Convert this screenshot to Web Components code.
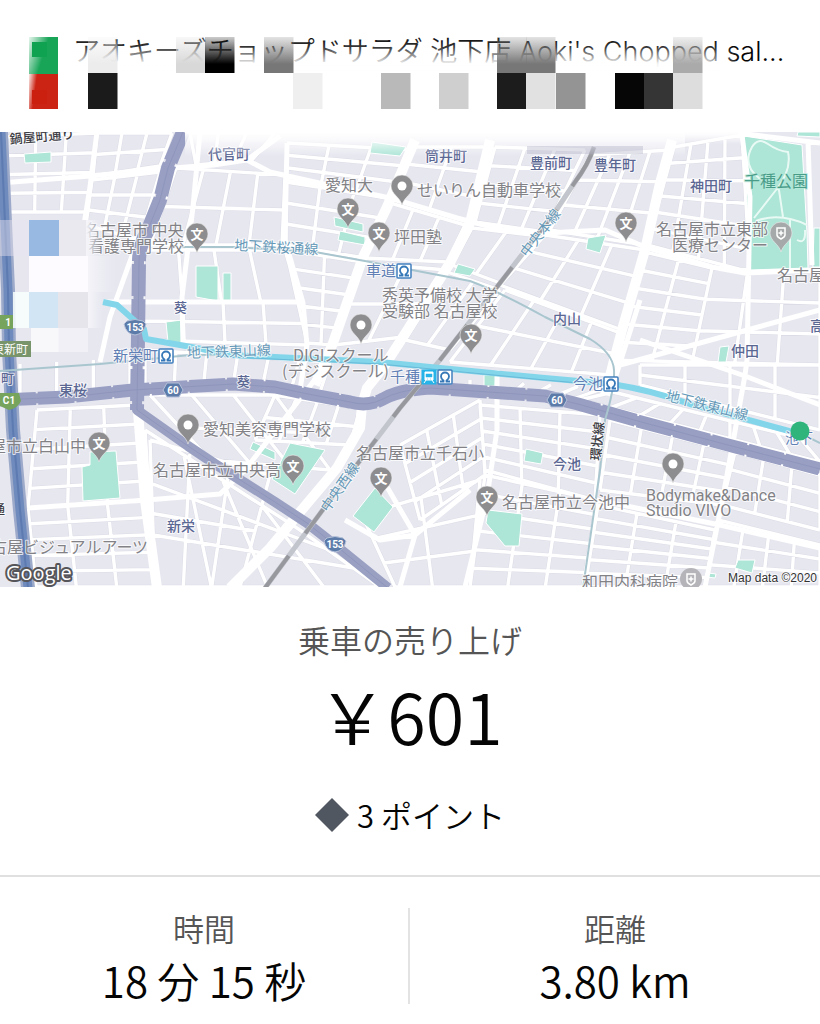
<!DOCTYPE html>
<html lang="ja">
<head>
<meta charset="utf-8">
<meta name="viewport" content="width=device-width, initial-scale=1">
<title>乗車の売り上げ</title>
<style>
  body {
    margin: 0;
    background: #fff;
    color: #050505;
    font-family: "Noto Sans CJK JP", "Noto Sans", sans-serif;
    font-weight: 350;
  }
</style>
</head>
<body>
<trip-receipt>
  <trip-address slot="address">アオキーズチョップドサラダ 池下店 Aoki's Chopped sal...</trip-address>
  <trip-map slot="map"></trip-map>
  <trip-earnings label="乗車の売り上げ" amount="￥601">3 ポイント</trip-earnings>
  <trip-metrics slot="metrics">
    <trip-metric label="時間">18 分 15 秒</trip-metric>
    <trip-metric label="距離">3.80 km</trip-metric>
  </trip-metrics>
</trip-receipt>

<script>
class TripReceipt extends HTMLElement {
  constructor() {
    super();
    this._root = this.attachShadow({ mode: "open" });
  }

  connectedCallback() {
    this._root.innerHTML = `
    <style>
        :host { display: flex; flex-direction: column; }
    </style>
    <slot name="address"></slot>
    <slot name="map"></slot>
    <slot></slot>
    <slot name="metrics"></slot>
    `;
  }
}
customElements.define("trip-receipt", TripReceipt);

class TripAddress extends HTMLElement {
  constructor() {
    super();
    this._root = this.attachShadow({ mode: "open" });
  }

  connectedCallback() {
    // redaction tiles: x, y, fill
    const tiles = [
      [88, 37, "url(#t1)"], [176, 37, "url(#t2)"], [205, 37, "url(#t3)"],
      [264, 37, "url(#t4)"], [497, 37, "url(#t4)"], [526, 37, "url(#t4)"],
      [673, 37, "url(#t5)"], [88, 73, "#1b1b1b"], [293, 73, "#efefef"],
      [381, 73, "#b9b9b9"], [439, 73, "#cfcfcf"], [497, 73, "#1c1c1c"],
      [526, 73, "#e1e1e1"], [556, 73, "#949494"], [615, 73, "#060606"],
      [644, 73, "#353535"], [673, 73, "#dddddd"]
    ];
    const fade = (id, color) => `
      <linearGradient id="${id}" x2="0" y2="1">
        <stop offset="0" stop-color="${color}" stop-opacity=".2"/>
        <stop offset=".75" stop-color="${color}"/>
      </linearGradient>`;

    this._root.innerHTML = `
    <style>
        :host {
            display: block;
            position: relative;
            box-sizing: border-box;
            padding: 32px 32px 60px 73px;
            font-family: Inter, "Noto Sans CJK JP", sans-serif;
            font-size: 27px;
            line-height: 40px;
            white-space: nowrap;
            overflow: hidden;
        }
        svg {
            position: absolute;
            top: 0;
            left: 0;
            width: 100%;
        }
    </style>
    <slot></slot>
    <svg viewBox="0 0 820 132" aria-hidden="true">
      <defs>
        <linearGradient id="veil" x2="0" y2="1">
          <stop offset="0" stop-color="#fff" stop-opacity="0"/>
          <stop offset=".3" stop-color="#fff" stop-opacity=".2"/>
          <stop offset=".75" stop-color="#fff" stop-opacity=".95"/>
          <stop offset="1" stop-color="#fff"/>
        </linearGradient>
        <linearGradient id="side">
          <stop offset="0" stop-color="#fff"/>
          <stop offset=".95" stop-color="#fff"/>
          <stop offset="1" stop-color="#000"/>
        </linearGradient>
        <mask id="m"><rect x="70" width="670" height="132" fill="url(#side)"/></mask>
        <linearGradient id="edge" x2="1" y2=".4">
          <stop offset="0" stop-color="#fff" stop-opacity=".9"/>
          <stop offset=".6" stop-color="#fff" stop-opacity="0"/>
        </linearGradient>
        ${fade("t1", "#ececec")}${fade("t2", "#d8d8d8")}${fade("t3", "#000")}
        ${fade("t4", "#777")}${fade("t5", "#aaa")}
      </defs>
      <rect x="70" y="36" width="670" height="37" fill="url(#veil)" mask="url(#m)"/>
      <rect x="29" y="37" width="29" height="37" fill="#18a558"/>
      <rect x="29" y="37" width="29" height="37" fill="url(#edge)"/>
      <rect x="32" y="42" width="15" height="15" fill="#0fa351"/>
      <rect x="29" y="74" width="29" height="35" fill="#cb2415"/>
      <rect x="29" y="74" width="12" height="35" fill="url(#edge)"/>
      <rect x="32" y="90" width="15" height="14" fill="#cb1f10"/>
      ${tiles.map(([x, y, fill]) => `<rect x="${x}" y="${y}" width="29.500" height="36" fill="${fill}"/>`).join("")}
    </svg>
    `;
  }
}
customElements.define("trip-address", TripAddress);

// Blocks of small streets: four corners, then columns and rows
const DISTRICTS = [
  [[5,137, 97,133, 88,212, 8,212], 3, 4],
  [[97,133, 172,133, 160,166, 93,176], 3, 2],
  [[92,180, 160,172, 140,240, 86,225], 3, 3],
  [[190,133, 275,133, 252,160, 196,165], 3, 1],
  [[176,168, 285,175, 282,245, 150,245], 4, 2],
  [[143,250, 285,250, 300,302, 143,302], 4, 1],
  [[143,302, 303,302, 307,345, 143,340], 4, 2],
  [[287,143, 413,150, 390,198, 286,180], 3, 3],
  [[286,182, 388,198, 365,258, 286,245], 3, 3],
  [[286,250, 363,262, 335,345, 307,343], 2, 5],
  [[413,147, 490,147, 468,222, 390,198], 2, 3],
  [[387,202, 465,225, 448,262, 365,258], 3, 1],
  [[363,263, 447,270, 403,337, 334,345], 2, 2],
  [[495,147, 585,150, 545,232, 475,222], 3, 4],
  [[472,228, 540,236, 500,283, 452,265], 2, 1],
  [[447,272, 500,290, 450,350, 405,340], 2, 1],
  [[590,155, 670,150, 645,245, 550,230], 4, 3],
  [[545,235, 645,250, 622,330, 500,285], 3, 3],
  [[505,290, 620,333, 612,375, 450,362], 4, 2],
  [[674,147, 742,135, 750,272, 647,245], 4, 6],
  [[645,252, 712,268, 692,362, 612,360], 2, 6],
  [[712,268, 820,272, 820,365, 692,362], 3, 3],
  [[640,365, 820,365, 820,430, 640,385], 4, 2],
  [[613,392, 800,438, 820,462, 580,400], 8, 1],
  [[470,380, 605,388, 570,400, 470,392], 5, 0],
  [[610,420, 735,452, 722,505, 600,490], 4, 4],
  [[735,452, 820,475, 820,530, 722,505], 3, 3],
  [[598,505, 715,530, 705,587, 585,587], 3, 6],
  [[718,520, 820,545, 820,587, 705,587], 4, 3],
  [[480,405, 600,415, 595,500, 485,470], 3, 5],
  [[485,475, 597,500, 583,587, 470,587], 3, 6],
  [[400,445, 480,400, 485,475, 420,520], 3, 4],
  [[362,515, 480,480, 470,587, 395,587], 2, 3],
  [[275,395, 360,408, 350,445, 255,440], 4, 2],
  [[150,395, 275,395, 330,470, 210,460], 3, 2],
  [[145,430, 300,530, 380,587, 155,587], 4, 3],
  [[150,440, 270,475, 240,587, 155,587], 3, 2],
  [[37,410, 137,405, 147,500, 28,508], 3, 5],
  [[28,508, 147,500, 157,587, 36,587], 3, 5],
  [[20,364, 130,358, 130,388, 20,394], 3, 0],
  [[145,350, 330,362, 320,392, 145,386], 6, 1]
];

const AVENUES = [
  "M0 183 90 176 160 169 213 165 247 160 280 136M247 160 270 172 337 187 390 198 457 218 503 230 545 233 605 230 645 247 712 267 745 273 820 270",
  "M97 132 90 187 84 225M200 132 193 207 182 297 183 345",
  "M103 302 303 302M133 253 110 317 100 362M287 143 285 240 303 303 307 345 300 390",
  "M742 135 750 197 747 360 745 375 732 448 722 502 705 587M808 140 812 265M738 133 820 143",
  "M28 508 147 500 220 494 245 470 330 360M612 360 613 385 640 300",
  "M597 500 720 525 820 548M620 365 820 310M640 340 745 376 820 405",
  "M497 370 497 430 487 497 465 587M383 480 415 535 400 587M345 520 380 540 415 535 470 490"
];

const BOULEVARDS = [
  "M415 140 387 207 363 257 333 343 315 385",
  "M490 140 470 223 450 263 403 337 383 368 367 388 362 405 360 428 337 468 300 512 270 548 230 588",
  "M672 140 660 183 645 250 622 330 605 395",
  "M138 412 145 500 157 588"
];

const PARKS = [
  "196,266 218,266 218,301 196,297", "223,273 231,273 231,302 223,302",
  "166,322 182,320 185,345 168,342", "24,154 51,152 51,162 25,163",
  "372,142 406,147 400,156 370,153", "334,217 363,224 363,232 335,226",
  "340,231 365,237 365,245 338,240", "458,264 475,269 470,276 454,273",
  "588,238 606,235 600,253 586,249", "744,136 802,145 807,233 808,268 750,270",
  "814,228 820,228 820,267 813,267", "798,132 820,132 820,137 797,136",
  "90,452 116,451 120,498 83,501 82,467 90,465",
  "290,443 325,450 295,494 272,479", "253,442 275,452 275,460 250,449",
  "375,488 393,507 374,532 353,516", "488,510 522,514 519,546 505,546 486,523",
  "526,449 543,453 541,464 524,461", "720,347 729,346 726,362 718,362",
  "738,560 755,560 752,573 735,568", "484,375 496,375 495,386 484,386",
  "708,573 716,574 715,578 707,577"
];

// x, baseline, size, text, kind, angle
const LABELS = [
  [10, 144, 13, "鍋屋町通り", "road", -5],
  [208, 159, 14, "代官町", "area"],
  [425, 161, 14, "筒井町", "area"],
  [530, 168, 14, "豊前町", "area"],
  [594, 170, 14, "豊年町", "area"],
  [690, 191, 14, "神田町", "area"],
  [744, 187, 16, "千種公園", "park"],
  [325, 191, 16, "愛知大", "poi"],
  [417, 196, 16, "せいりん自動車学校", "poi"],
  [84, 236, 16, "名古屋市 中央", "poi"],
  [88, 252, 16, "看護専門学校", "poi"],
  [394, 243, 16, "坪田塾", "poi"],
  [656, 235, 16, "名古屋市立東部", "poi"],
  [672, 251, 16, "医療センター", "poi"],
  [777, 281, 16, "名古屋", "poi"],
  [234, 250, 14, "地下鉄桜通線", "line", 3],
  [527, 258, 14, "中央本線", "line", -52],
  [366, 276, 15, "車道", "station"],
  [382, 301, 16, "秀英予備校 大学", "poi"],
  [382, 317, 16, "受験部 名古屋校", "poi"],
  [174, 312, 13, "葵", "area"],
  [553, 324, 14, "内山", "area"],
  [731, 356, 14, "仲田", "area"],
  [810, 331, 14, "高", "area"],
  [113, 361, 15, "新栄町", "station"],
  [187, 358, 14, "地下鉄東山線", "line", -2],
  [293, 361, 16, "DIGIスクール", "poi"],
  [282, 377, 16, "(デジスクール)", "poi"],
  [390, 382, 15, "千種", "station"],
  [237, 386, 13, "葵", "area"],
  [59, 395, 14, "東桜", "area"],
  [1, 383, 13, "町", "area"],
  [203, 435, 16, "愛知美容専門学校", "poi"],
  [-10, 452, 16, "屋市立白山中", "poi"],
  [153, 476, 16, "名古屋市立中央高", "poi"],
  [356, 459, 16, "名古屋市立千石小", "poi"],
  [502, 508, 16, "名古屋市立今池中", "poi"],
  [167, 531, 14, "新栄", "area"],
  [-9, 553, 16, "古屋ビジュアルアーツ", "poi"],
  [328, 513, 14, "中央西線", "line", -55],
  [573, 389, 15, "今池", "station"],
  [553, 469, 14, "今池", "area"],
  [665, 400, 14, "地下鉄東山線", "line", 14],
  [785, 443, 14, "池下", "station"],
  [600, 461, 13, "環状線", "road", -84],
  [646, 501, 16, "Bodymake&amp;Dance", "latin"],
  [646, 516, 16, "Studio VIVO", "latin"],
  [582, 588, 16, "和田内科病院", "poi"],
  [-7, 514, 12, "通", "road"]
];

const SCHOOL_PINS = [[348,209], [379,233], [197,234], [471,335], [626,223], [99,443], [293,466], [381,478], [487,497]];
const PLACE_PINS = [[402,186], [361,325], [188,425], [673,464]];
const METRO_STOPS = [[404,271], [166,356], [445,377], [611,384]];
const SHIELDS = [[135,327,"153"], [335,544,"153"], [173,390,"60"], [557,400,"60"]];

class TripMap extends HTMLElement {
  constructor() {
    super();
    this._root = this.attachShadow({ mode: "open" });
  }

  district([[ax, ay, bx, by, cx, cy, dx, dy], cols, rows]) {
    const mix = (a, b, t) => (a + (b - a) * t).toFixed(1);
    let d = "";
    for (let i = 0; i <= cols; i++) {
      const t = i / cols;
      d += `M${mix(ax, bx, t)} ${mix(ay, by, t)}L${mix(dx, cx, t)} ${mix(dy, cy, t)}`;
    }
    for (let i = 0; rows && i <= rows; i++) {
      const t = i / rows;
      d += `M${mix(ax, dx, t)} ${mix(ay, dy, t)}L${mix(bx, cx, t)} ${mix(by, cy, t)}`;
    }
    return d;
  }

  pin([x, y], inner, fill = "#8d8d8f") {
    return `<g transform="translate(${x} ${y})">
      <path d="M0 19C-2 11-11 8-11 0A11 11 0 0 1 11 0C11 8 2 11 0 19Z" fill="${fill}" stroke="#eee" stroke-width=".6"/>
      ${inner}
    </g>`;
  }

  connectedCallback() {
    const streets = DISTRICTS.map((d) => this.district(d)).join("");
    const road60 = "M0 400 67 397 133 390 233 384 275 387 303 393 350 402Q368 407 383 399 398 390 430 388L503 393 545 396 578 404 645 423 728 445 820 469";
    const road153 = "M183 132 168 168 160 200 147 232Q139 245 139 262L137 410 188 446 215 464 275 502 307 523 335 545 388 588";
    const expressway = "M1 132 8 290 9 350 13 430 20 510 28 588";
    const railway = "M594 147Q588 165 575 182L555 212 500 283 440 360 400 408 330 500 265 588";
    const cross = `<path d="M-4-5H4V2Q4 4 0 6-4 4-4 2ZM0-2.500V2.500M-2.500 0H2.500" fill="none" stroke="#fff" stroke-width="1.500"/>`;

    this._root.innerHTML = `
    <style>
        :host { display: block; }
        svg { display: block; width: 100%; }
        text {
            font-family: "Noto Sans CJK JP", sans-serif;
            font-weight: 400;
            paint-order: stroke;
            stroke: #fff;
            stroke-opacity: .75;
            stroke-width: 2px;
            stroke-linejoin: round;
        }
        .area { fill: #5b6793; font-weight: 500; }
        .poi, .latin { fill: #828286; }
        .latin { font-family: Roboto, sans-serif; }
        .line { fill: #6699b8; }
        .station { fill: #5f7fb5; }
        .park { fill: #489c88; stroke: #b5e8d9; }
        .road { fill: #3d3d44; font-weight: 500; }
        .sign { fill: #fff; stroke: none; font-size: 12px; }
        .glyph { fill: #fff; stroke: none; font-weight: 700; text-anchor: middle; }
        .shield { font-family: Roboto, sans-serif; font-size: 10px; }
        .google {
            font-family: "Open Sans", sans-serif;
            font-size: 20px;
            font-weight: 500;
            fill: #fff;
            stroke: #55555a;
            stroke-opacity: 1;
            stroke-width: 4px;
        }
        .credit {
            font-family: "Liberation Sans", sans-serif;
            font-size: 12px;
            fill: #333;
            text-anchor: end;
        }
    </style>
    <svg viewBox="0 132 820 455" role="img" aria-label="ルートマップ">
      <defs>
        <linearGradient id="top" x2="0" y2="1">
          <stop offset="0" stop-color="#fff"/>
          <stop offset=".3" stop-color="#fff" stop-opacity=".8"/>
          <stop offset="1" stop-color="#fff" stop-opacity="0"/>
        </linearGradient>
        <linearGradient id="right">
          <stop offset="0" stop-color="#f5f5f9"/>
          <stop offset="1" stop-color="#f0f0f6" stop-opacity="0"/>
        </linearGradient>
      </defs>
      <rect y="132" width="820" height="455" fill="#e7e7f0"/>
      <path d="${streets}" fill="none" stroke="#dcdce6" stroke-width="4.400"/>
      <path d="${streets}" fill="none" stroke="#fff" stroke-width="3.400"/>
      <g fill="#ade5d6" stroke="#fff" stroke-width="1">
        ${PARKS.map((p) => `<polygon points="${p}"/>`).join("")}
      </g>
      <path d="M752 147Q758 137 768 144T788 152Q792 170 776 190L754 218M752 147Q742 165 759 178L779 190 783 217M756 221Q780 212 807 225M790 220V268M797 240Q806 245 805 230" fill="none" stroke="#e9faf5" stroke-width="2"/>
      <g fill="none" stroke="#fff" stroke-linejoin="round">
        <path d="${AVENUES.join("")}" stroke-width="5"/>
        <path d="${BOULEVARDS.join("")}" stroke-width="10"/>
      </g>

      <g fill="none" stroke-linejoin="round">
        <path d="${road60}${road153}" stroke="#9aa0c2" stroke-width="10"/>
        <path d="${road60}" stroke="#999fc3" stroke-width="13" stroke-dasharray="36 2"/>
        <path d="M183 132 168 168 160 200 147 232Q139 245 139 262L137 410" stroke="#999fc3" stroke-width="14" stroke-dasharray="32 3"/>
        <path d="${road60}${road153}" stroke="#8f96bc" stroke-width="1"/>
        <path d="${expressway}" stroke="#9daac9" stroke-width="14"/>
        <path d="${expressway}" stroke="#6f8abc" stroke-width="9"/>
        <path d="${expressway}" stroke="#5d7ab1" stroke-width="2"/>
        <path d="${railway}" stroke="#c2c5cc" stroke-width="5"/>
        <path d="${railway}" stroke="#96989d" stroke-width="4" stroke-dasharray="45 28"/>
        <path d="M0 371 100 364 190 355 270 354M180 247 233 247 315 252 365 261 412 270 470 281Q500 292 545 317L590 339Q613 353 614 370T605 420L600 470 583 588M800 433 820 443" stroke="#a9c6cf" stroke-width="2"/>
        <path d="M103 302 117 305 144 329 146 339 197 348 230 355 380 362 430 367 545 378 612 384Q650 390 690 404L800 434" stroke="#83d6ea" stroke-width="6"/>
        <path d="M230 357 380 364 545 380 612 386" stroke="#68bad8" stroke-width="1"/>
      </g>

      ${LABELS.map(([x, y, size, text, kind, angle = 0]) =>
        `<text class="${kind}" font-size="${size}" transform="translate(${x} ${y}) rotate(${angle})">${text}</text>`).join("")}

      ${SCHOOL_PINS.map((p) => this.pin(p, `<text class="glyph" font-size="13" y="5">文</text>`)).join("")}
      ${PLACE_PINS.map((p) => this.pin(p, `<circle r="4.500" fill="#fff"/>`)).join("")}
      ${this.pin([781, 233], cross, "#a6a9a9")}
      <circle cx="691" cy="579" r="11" fill="#b5b5b9"/>
      <g transform="translate(691 579)">${cross}</g>

      ${METRO_STOPS.map(([x, y]) => `<g transform="translate(${x} ${y})">
        <rect x="-7" y="-7" width="14" height="14" rx="1" fill="#fff" stroke="#4180bf" stroke-width="1.500"/>
        <path d="M-5 4.500H-1.500V3.500Q-4 2-4-.500A4 4 0 0 1 4-.500Q4 2 1.500 3.500V4.500H5" fill="none" stroke="#3577b7" stroke-width="1.800"/>
      </g>`).join("")}
      <g transform="translate(429 377)">
        <rect x="-7.500" y="-7.500" width="15" height="15" fill="#25b3e8"/>
        <path d="M-4-5H4V3H-4ZM-3 3-5 6M3 3 5 6" fill="#fff" stroke="#fff"/>
        <path d="M-3-3H3V0H-3ZM-2 2H-1M1 2H2" fill="#25b3e8" stroke="#25b3e8" stroke-width=".5"/>
      </g>

      ${SHIELDS.map(([x, y, no]) => `<g transform="translate(${x} ${y})">
        <path d="${no === "60" ? "M-6-7H6L10 0 6 7H-6L-10 0Z" : "M-8-6Q0-9 8-6L11-3Q9 7 0 8-9 7-11-3Z"}" fill="#5c7ba9" stroke="#b6c1d9"/>
        <text class="glyph shield" y="4">${no}</text>
      </g>`).join("")}
      <g fill="#77a45c">
        <path d="M0 393H19L21 401Q18 408 9 410L0 406Z"/>
        <rect y="341" width="31" height="16" fill="#78946b"/>
        <rect y="315" width="13" height="14"/>
      </g>

      <g>
        <rect x="0" y="220" width="29" height="36" fill="#e6e2f0" opacity=".45"/>
        <rect x="16" y="256" width="13" height="36" fill="#e7e4ed" opacity=".7"/>
        <rect x="13" y="292" width="16" height="36" fill="#f8fffe" opacity=".85"/>
        <rect x="58" y="220" width="28" height="36" fill="#e9e9ef"/>
        <rect x="86" y="220" width="16" height="36" fill="url(#right)"/>
        <rect x="86" y="256" width="30" height="36" fill="url(#right)"/>
        <rect x="29" y="220" width="30" height="36" fill="#98bae2"/>
        <rect x="29" y="256" width="59" height="36" fill="#fdfbff"/>
        <rect x="29" y="292" width="30" height="36" fill="#d2e5f5"/>
        <rect x="58" y="292" width="30" height="36" fill="#e7e5ec"/>
        <rect x="88" y="292" width="15" height="36" fill="url(#right)"/>
        <rect x="31" y="328" width="28" height="24" fill="#fff" opacity=".7"/>
        <rect x="58" y="328" width="30" height="24" fill="#f4f3f8" opacity=".8"/>
        <rect x="185" y="132" width="500" height="24" fill="url(#top)"/>
        <rect x="685" y="132" width="55" height="12" fill="url(#top)"/>
        <rect x="527" y="146" width="116" height="8" fill="#a8aac0" opacity=".35"/>
      </g>

      <text class="glyph shield" x="9" y="404">C1</text>
      <text class="glyph shield" x="8" y="326">1</text>
      <text class="sign" x="-8" y="354">東新町</text>
      <circle cx="800" cy="431" r="9.500" fill="#2fb47c"/>

      <text class="google" x="6" y="580">Google</text>
      <text class="credit" x="817" y="582">Map data ©2020</text>
    </svg>
    `;
  }
}
customElements.define("trip-map", TripMap);

class TripEarnings extends HTMLElement {
  constructor() {
    super();
    this._root = this.attachShadow({ mode: "open" });
  }

  connectedCallback() {
    this._root.innerHTML = `
    <style>
        :host {
            display: block;
            padding: 28px 16px 36px;
            text-align: center;
            border-bottom: 2px solid #e0e0e0;
        }
        h1, p { margin: 0; font-weight: inherit; }
        h1 {
            font-size: 32px;
            line-height: 48px;
            color: #555;
        }
        .amount {
            margin: 12px 0 36px;
            font-size: 70px;
            line-height: 80px;
        }
        .points {
            display: flex;
            align-items: center;
            justify-content: center;
            gap: 8px;
            font-size: 31px;
            line-height: 48px;
        }
        svg { width: 34px; height: 34px; }
    </style>
    <h1>${this.getAttribute("label")}</h1>
    <p class="amount">${this.getAttribute("amount")}</p>
    <p class="points">
      <svg viewBox="0 0 34 34" aria-hidden="true"><path d="M17 0 34 17 17 34 0 17Z" fill="#505761"/></svg>
      <span><slot></slot></span>
    </p>
    `;
  }
}
customElements.define("trip-earnings", TripEarnings);

class TripMetrics extends HTMLElement {
  constructor() {
    super();
    this._root = this.attachShadow({ mode: "open" });
  }

  connectedCallback() {
    this._root.innerHTML = `
    <style>
        :host {
            display: grid;
            grid-template-columns: 1fr 1fr;
            padding: 31px 0 20px;
        }
        ::slotted(:not(:last-child)) { border-right: 2px solid #e3e3e3; }
    </style>
    <slot></slot>
    `;
  }
}
customElements.define("trip-metrics", TripMetrics);

class TripMetric extends HTMLElement {
  constructor() {
    super();
    this._root = this.attachShadow({ mode: "open" });
  }

  connectedCallback() {
    this._root.innerHTML = `
    <style>
        :host { display: block; text-align: center; }
        dl, dd { margin: 0; }
        dt {
            font-size: 31px;
            line-height: 40px;
            color: #555;
        }
        dd {
            margin-top: 8px;
            font-size: 42px;
            line-height: 48px;
        }
    </style>
    <dl>
      <dt>${this.getAttribute("label")}</dt>
      <dd><slot></slot></dd>
    </dl>
    `;
  }
}
customElements.define("trip-metric", TripMetric);
</script>
</body>
</html>
